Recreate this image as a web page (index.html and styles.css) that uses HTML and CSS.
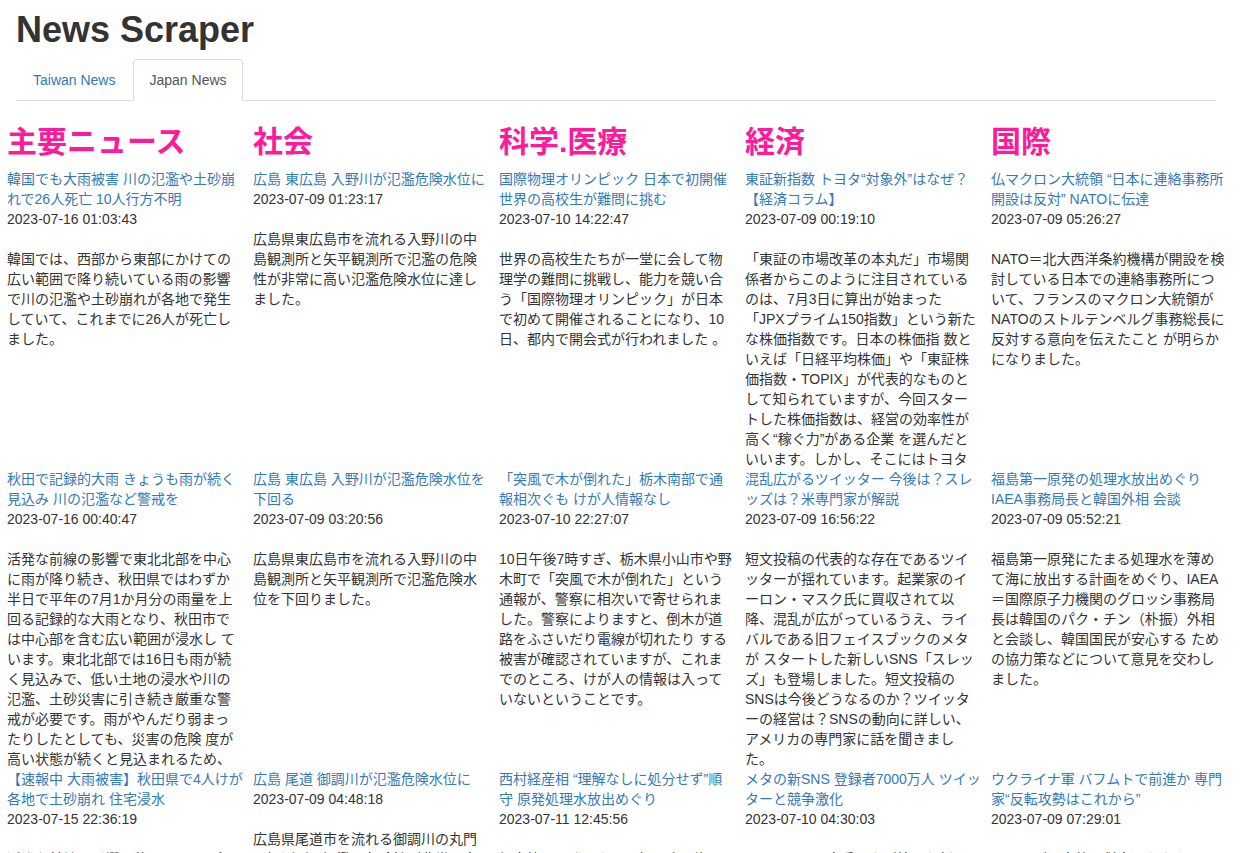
FILE: index.html
```html
<!DOCTYPE html>
<html lang="ja">
<head>
<meta charset="utf-8">
<title>News Scraper</title>
<link rel="stylesheet" href="styles.css">
</head>
<body>
<div class="container">
  <h1 class="page-title">News Scraper</h1>
  <ul class="tabs">
    <li class="tab"><a href="#">Taiwan News</a></li>
    <li class="tab active"><a href="#">Japan News</a></li>
  </ul>
</div>
<div class="columns">
  <section class="col">
    <h2 class="cat">主要ニュース</h2>
    <div class="article">
      <a class="title" href="#">韓国でも大雨被害 川の氾濫や土砂崩れで26人死亡 10人行方不明</a>
      <div class="date">2023-07-16 01:03:43</div>
      <p class="body">韓国では、西部から東部にかけての広い範囲で降り続いている雨の影響で川の氾濫や土砂崩れが各地で発生していて、これまでに26人が死亡しました。</p>
    </div>
    <div class="article">
      <a class="title" href="#">秋田で記録的大雨 きょうも雨が続く見込み 川の氾濫など警戒を</a>
      <div class="date">2023-07-16 00:40:47</div>
      <p class="body">活発な前線の影響で東北北部を中心に雨が降り続き、秋田県ではわずか半日で平年の7月1か月分の雨量を上回る記録的な大雨となり、秋田市では中心部を含む広い範囲が浸水し ています。東北北部では16日も雨が続く見込みで、低い土地の浸水や川の氾濫、土砂災害に引き続き厳重な警戒が必要です。雨がやんだり弱まったりしたとしても、災害の危険 度が高い状態が続くと見込まれるため、引き続き警戒してください。</p>
    </div>
    <div class="article">
      <a class="title" href="#">【速報中 大雨被害】秋田県で4人けが 各地で土砂崩れ 住宅浸水</a>
      <div class="date">2023-07-15 22:36:19</div>
      <p class="body">活発な前線の影響で秋田県では記録的な大雨となり、各地で土砂崩れや住宅の浸水が相次いでいます。</p>
    </div>
  </section>
  <section class="col">
    <h2 class="cat">社会</h2>
    <div class="article">
      <a class="title" href="#">広島 東広島 入野川が氾濫危険水位に</a>
      <div class="date">2023-07-09 01:23:17</div>
      <p class="body">広島県東広島市を流れる入野川の中島観測所と矢平観測所で氾濫の危険性が非常に高い氾濫危険水位に達しました。</p>
    </div>
    <div class="article">
      <a class="title" href="#">広島 東広島 入野川が氾濫危険水位を下回る</a>
      <div class="date">2023-07-09 03:20:56</div>
      <p class="body">広島県東広島市を流れる入野川の中島観測所と矢平観測所で氾濫危険水位を下回りました。</p>
    </div>
    <div class="article">
      <a class="title" href="#">広島 尾道 御調川が氾濫危険水位に</a>
      <div class="date">2023-07-09 04:48:18</div>
      <p class="body">広島県尾道市を流れる御調川の丸門田観測所で氾濫の危険性が非常に高い氾濫危険水位に達しました。</p>
    </div>
  </section>
  <section class="col">
    <h2 class="cat">科学.医療</h2>
    <div class="article">
      <a class="title" href="#">国際物理オリンピック 日本で初開催 世界の高校生が難問に挑む</a>
      <div class="date">2023-07-10 14:22:47</div>
      <p class="body">世界の高校生たちが一堂に会して物理学の難問に挑戦し、能力を競い合う「国際物理オリンピック」が日本で初めて開催されることになり、10日、都内で開会式が行われました 。</p>
    </div>
    <div class="article">
      <a class="title" href="#">「突風で木が倒れた」栃木南部で通報相次ぐも けが人情報なし</a>
      <div class="date">2023-07-10 22:27:07</div>
      <p class="body">10日午後7時すぎ、栃木県小山市や野木町で「突風で木が倒れた」という通報が、警察に相次いで寄せられました。警察によりますと、倒木が道路をふさいだり電線が切れたり する被害が確認されていますが、これまでのところ、けが人の情報は入っていないということです。</p>
    </div>
    <div class="article">
      <a class="title" href="#">西村経産相 “理解なしに処分せず”順守 原発処理水放出めぐり</a>
      <div class="date">2023-07-11 12:45:56</div>
      <p class="body">福島第一原発にたまる処理水の海への放出をめぐり、西村経済産業大臣は関係者の理解なしにいかなる処分も行わないとする方針を順守すると述べました。</p>
    </div>
  </section>
  <section class="col">
    <h2 class="cat">経済</h2>
    <div class="article">
      <a class="title" href="#">東証新指数 トヨタ“対象外”はなぜ？【経済コラム】</a>
      <div class="date">2023-07-09 00:19:10</div>
      <p class="body">「東証の市場改革の本丸だ」市場関係者からこのように注目されているのは、7月3日に算出が始まった「JPXプライム150指数」という新たな株価指数です。日本の株価指 数といえば「日経平均株価」や「東証株価指数・TOPIX」が代表的なものとして知られていますが、今回スタートした株価指数は、経営の効率性が高く“稼ぐ力”がある企業 を選んだといいます。しかし、そこにはトヨタ自動車など日本を代表する企業が含まれていません。</p>
    </div>
    <div class="article">
      <a class="title" href="#">混乱広がるツイッター 今後は？スレッズは？米専門家が解説</a>
      <div class="date">2023-07-09 16:56:22</div>
      <p class="body">短文投稿の代表的な存在であるツイッターが揺れています。起業家のイーロン・マスク氏に買収されて以降、混乱が広がっているうえ、ライバルである旧フェイスブックのメタが スタートした新しいSNS「スレッズ」も登場しました。短文投稿のSNSは今後どうなるのか？ツイッターの経営は？SNSの動向に詳しい、アメリカの専門家に話を聞きました。</p>
    </div>
    <div class="article">
      <a class="title" href="#">メタの新SNS 登録者7000万人 ツイッターと競争激化</a>
      <div class="date">2023-07-10 04:30:03</div>
      <p class="body">アメリカのIT大手メタが始めた新しいSNS「スレッズ」の登録者数が、サービス開始から5日間で7000万人を超えました。</p>
    </div>
  </section>
  <section class="col">
    <h2 class="cat">国際</h2>
    <div class="article">
      <a class="title" href="#">仏マクロン大統領 “日本に連絡事務所開設は反対” NATOに伝達</a>
      <div class="date">2023-07-09 05:26:27</div>
      <p class="body">NATO＝北大西洋条約機構が開設を検討している日本での連絡事務所について、フランスのマクロン大統領がNATOのストルテンベルグ事務総長に反対する意向を伝えたこと が明らかになりました。</p>
    </div>
    <div class="article">
      <a class="title" href="#">福島第一原発の処理水放出めぐり IAEA事務局長と韓国外相 会談</a>
      <div class="date">2023-07-09 05:52:21</div>
      <p class="body">福島第一原発にたまる処理水を薄めて海に放出する計画をめぐり、IAEA＝国際原子力機関のグロッシ事務局長は韓国のパク・チン（朴振）外相と会談し、韓国国民が安心する ための協力策などについて意見を交わしました。</p>
    </div>
    <div class="article">
      <a class="title" href="#">ウクライナ軍 バフムトで前進か 専門家“反転攻勢はこれから”</a>
      <div class="date">2023-07-09 07:29:01</div>
      <p class="body">ロシアが一方的に併合したウクライナ東部ドネツク州のバフムトをめぐり、ウクライナ軍は前進していると主張しています。</p>
    </div>
  </section>
</div>
</body>
</html>
```

FILE: styles.css
```css
html, body {
  margin: 0;
  padding: 0;
  background: #fff;
}

body {
  font-family: "Helvetica Neue", "Liberation Sans", Arial, "Noto Sans CJK JP", sans-serif;
  font-size: 14px;
  line-height: 20px;
  color: #333;
}

.container {
  width: 1200px;
  margin: 0 16px;
}

.page-title {
  margin: 10px 0 9px 0;
  font-size: 36px;
  line-height: 39.6px;
  font-weight: 700;
  color: #333;
}

.tabs {
  display: flex;
  list-style: none;
  margin: 0;
  padding: 0 0 0 1px;
  border-bottom: 1px solid #ddd;
}

.tab {
  margin-right: 2px;
  margin-bottom: -1px;
}

.tab a {
  display: block;
  padding: 10px 15px;
  line-height: 20px;
  border: 1px solid transparent;
  border-radius: 4px 4px 0 0;
  color: #337ab7;
  text-decoration: none;
}

.tab.active a {
  color: #555;
  background: #fff;
  border-color: #ddd #ddd transparent #ddd;
}

.columns {
  display: grid;
  grid-template-columns: repeat(5, 246px);
  padding-left: 7px;
}

.col {
  padding-right: 10px;
  min-width: 0;
}

.cat {
  margin: 24px 0 10px 0;
  font-size: 30px;
  line-height: 34px;
  font-weight: 700;
  color: #ff1a9c;
}

.article {
  height: 300px;
  overflow: hidden;
}

.title {
  display: block;
  color: #337ab7;
  text-decoration: none;
}

.date {
  color: #333;
}

.body {
  margin: 20px 0 0 0;
}
```
